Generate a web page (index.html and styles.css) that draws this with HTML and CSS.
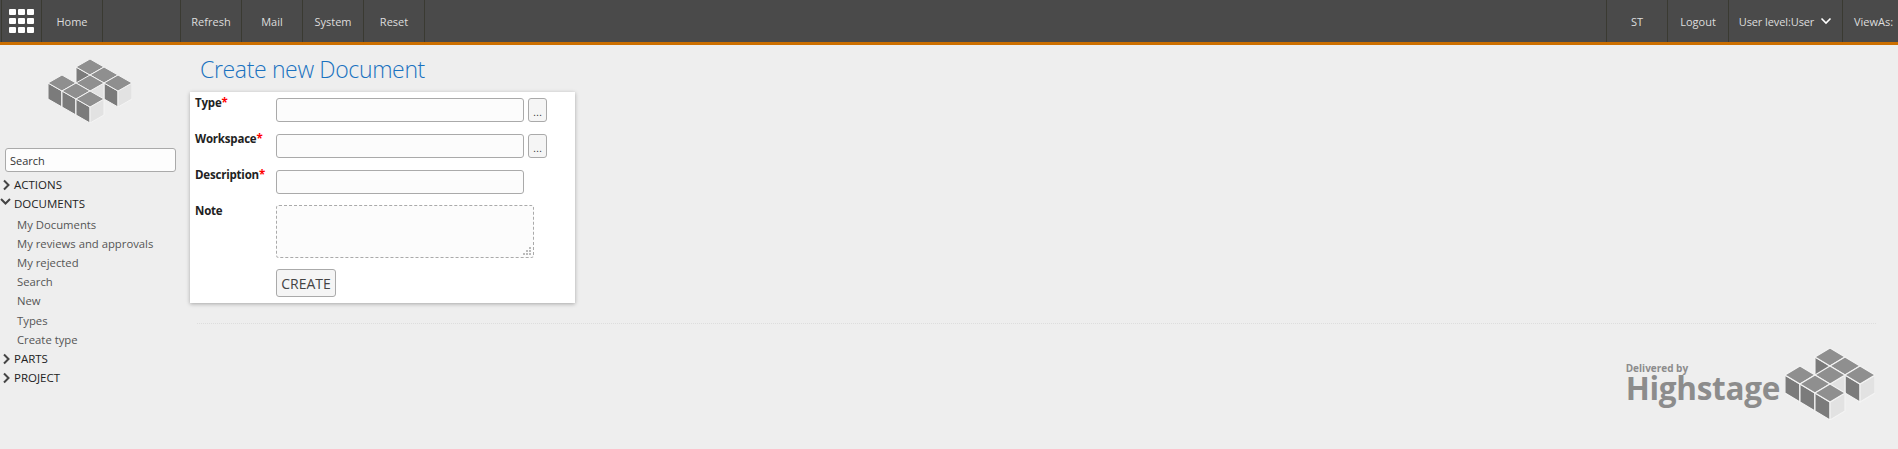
FILE: index.html
```html
<!DOCTYPE html>
<html lang="en">
<head>
  <meta charset="UTF-8" />
  <title>Create new Document</title>
  <link rel="stylesheet" href="styles.css">
</head>
<body>
  <svg class="defs" width="0" height="0">
    <defs>
      <g id="cube">
        <polygon class="left" points="-14,0 0,8 0,24 -14,16" />
        <polygon class="right" points="14,0 0,8 0,24 14,16" />
        <polygon class="top" points="0,-8 14,0 0,8 -14,0" />
      </g>
      <symbol id="logo" viewBox="0 0 84 64" preserveAspectRatio="none">
        <use href="#cube" x="42" y="8" />
        <use href="#cube" x="56" y="16" />
        <use href="#cube" x="70" y="24" />
        <use href="#cube" x="42" y="24" />
        <use href="#cube" x="14" y="24" />
        <use href="#cube" x="28" y="32" />
        <use href="#cube" x="42" y="40" />
      </symbol>
    </defs>
  </svg>

  <header class="topbar">
    <nav class="nav">
      <a class="apps" href="#">
        <span class="apps-grid">
          <i></i><i></i><i></i><i></i><i></i><i></i><i></i><i></i><i></i>
        </span>
      </a>
      <a class="w61" href="#">Home</a>
      <a class="w78" href="#"></a>
      <a class="w61" href="#">Refresh</a>
      <a class="w61" href="#">Mail</a>
      <a class="w61" href="#">System</a>
      <a class="w61" href="#">Reset</a>
    </nav>
    <nav class="nav nav-right">
      <a class="w61" href="#">ST</a>
      <a class="w61" href="#">Logout</a>
      <a class="w114" href="#">User level:User
        <svg class="caret" width="12" height="8" viewBox="0 0 12 8"><path d="M1.5 1.5 6 6l4.5-4.5" fill="none" stroke="#fff" stroke-width="1.6" /></svg>
      </a>
      <a class="viewas" href="#">ViewAs:</a>
    </nav>
  </header>

  <div class="layout">
    <aside class="sidebar">
      <svg class="side-logo"><use href="#logo" /></svg>
      <input class="side-search" type="text" value="Search" />
      <ul class="menu">
        <li class="menu-head"><svg class="chev" width="9" height="12" viewBox="0 0 9 12"><path d="M2 1.5 6.5 6 2 10.5" /></svg>ACTIONS</li>
        <li class="menu-head"><svg class="chev" width="9" height="12" viewBox="0 0 9 12"><path d="M-1 1 3.5 5.5 8 1" /></svg>DOCUMENTS</li>
        <li class="menu-item first">My Documents</li>
        <li class="menu-item">My reviews and approvals</li>
        <li class="menu-item">My rejected</li>
        <li class="menu-item">Search</li>
        <li class="menu-item">New</li>
        <li class="menu-item types">Types</li>
        <li class="menu-item">Create type</li>
        <li class="menu-head"><svg class="chev" width="9" height="12" viewBox="0 0 9 12"><path d="M2 1.5 6.5 6 2 10.5" /></svg>PARTS</li>
        <li class="menu-head"><svg class="chev" width="9" height="12" viewBox="0 0 9 12"><path d="M2 1.5 6.5 6 2 10.5" /></svg>PROJECT</li>
      </ul>
    </aside>

    <main class="content">
      <h1>Create new Document</h1>
      <form class="card">
        <div class="row">
          <label>Type<span class="req">*</span></label>
          <input type="text" /><button type="button" class="pick">...</button>
        </div>
        <div class="row">
          <label>Workspace<span class="req">*</span></label>
          <input type="text" /><button type="button" class="pick">...</button>
        </div>
        <div class="row">
          <label>Description<span class="req">*</span></label>
          <input type="text" />
        </div>
        <div class="row row-note">
          <label>Note</label>
          <div class="note-wrap">
            <textarea></textarea>
            <svg class="grip" width="8" height="8" viewBox="0 0 8 8" fill="#bbb">
              <rect x="6" y="0" width="2" height="2" />
              <rect x="3" y="3" width="2" height="2" /><rect x="6" y="3" width="2" height="2" />
              <rect x="0" y="6" width="2" height="2" /><rect x="3" y="6" width="2" height="2" /><rect x="6" y="6" width="2" height="2" />
            </svg>
          </div>
        </div>
        <div class="row row-submit">
          <label></label>
          <button type="button" class="create">CREATE</button>
        </div>
      </form>
      <hr class="rule" />
      <div class="delivered">
        <div class="brand">
          <span class="brand-by">Delivered by</span>
          <span class="brand-name">Highstage</span>
        </div>
        <svg class="foot-logo"><use href="#logo" /></svg>
      </div>
    </main>
  </div>
</body>
</html>
```

FILE: styles.css
```css
* { box-sizing: border-box; }
html, body { height: 100%; }
body { margin: 0; background: #eee; color: #222; font-family: "Open Sans", "Noto Sans", sans-serif; font-size: 12px; overflow: hidden; }
.defs { display: block; height: 0; }

.left { fill: #7b7b7b; stroke: #f4f4f4; stroke-width: 1; }
.right { fill: #e2e2e2; stroke: #f4f4f4; stroke-width: 1; }
.top { fill: #8f8f8f; stroke: #f4f4f4; stroke-width: 1; }

.topbar { display: flex; justify-content: space-between; height: 45px; background: #4a4a4a; border-bottom: 3px solid #cc6f00; }
.nav { display: flex; margin-left: 1px; border-left: 1px solid #3a3a32; }
.nav a { display: flex; align-items: center; justify-content: center; gap: 6px; height: 42px; border-right: 1px solid #3a3a32; color: #ddd; font-size: 11px; text-decoration: none; }
.nav-right { border-left: 1px solid #3a3a32; }
.nav-right a:last-child { border-right: 0; }
.apps { width: 40px; }
.w61 { width: 61px; }
.w78 { width: 78px; }
.w114 { width: 114px; letter-spacing: -.1px; }
.viewas { width: 55px; justify-content: flex-start !important; padding-left: 11px; }
.apps-grid { display: grid; grid-template-columns: repeat(3, 7px); grid-auto-rows: 6px; gap: 3px 2px; }
.apps-grid i { background: #fff; border-radius: 1px; }

.layout { display: flex; }
.sidebar { width: 190px; flex: none; padding: 14px 0 0 5px; }
.side-logo { display: block; width: 84px; height: 64px; margin: 0 0 25px 43px; }
.side-search { display: block; width: 171px; height: 24px; padding: 0 4px; border: 1px solid #aaa; border-radius: 3px; background: #fdfdfd; color: #333; font: 11px "Open Sans", "Noto Sans", sans-serif; }
.menu { list-style: none; margin: 3px 0 0 -3px; padding: 0; }
.menu-head { display: flex; align-items: center; height: 19px; color: #222; font-size: 11.5px; }
.chev { flex: none; margin-right: 3px; fill: none; stroke: #444; stroke-width: 2; overflow: visible; }
.menu-item { height: 19px; line-height: 19px; padding-left: 15px; color: #555; font-size: 11.3px; }
.first { margin-top: 2px; }
.types { margin-top: 1px; }

.content { flex: 1; min-width: 0; }
h1 { margin: 7px 0 0 10px; height: 40px; color: #1a72c0; font-size: 23px; font-weight: 300; line-height: 34px; letter-spacing: -.35px; }
.card { width: 385px; height: 211px; padding: 6px 0 0 5px; background: #fff; box-shadow: 0 1px 4px rgba(0,0,0,.3); }
.row { display: flex; height: 36px; }
.row label { width: 81px; flex: none; margin-top: -2px; font-weight: 700; font-size: 11.5px; line-height: 14px; letter-spacing: -.2px; color: #222; }
.req { color: #f00; }
.row input { width: 248px; height: 24px; padding: 0 4px; border: 1px solid #aaa; border-radius: 3px; background: #fcfcfc; }
.pick { width: 19px; height: 24px; margin-left: 4px; padding: 0; border: 1px solid #aaa; border-radius: 3px; background: #f5f5f5; color: #444; font-size: 11px; line-height: 26px; }
.row-note { height: 64px; margin-top: -1px; }
.row-note label { margin-top: -1px; }
.note-wrap { position: relative; width: 258px; height: 53px; }
.note-wrap textarea { display: block; width: 258px; height: 53px; border: 1px dashed #aaa; border-radius: 3px; background: #fcfcfc; resize: none; }
.grip { position: absolute; right: 3px; bottom: 3px; }
.row-submit { height: 28px; }
.create { width: 60px; height: 28px; padding: 0; border: 1px solid #aaa; border-radius: 3px; background: #f5f5f5; color: #444; font: 14px "Open Sans", "Noto Sans", sans-serif; }

.rule { height: 0; margin: 20px 22px 0 7px; border: 0; border-top: 1px dotted #ddd; }
.delivered { display: flex; justify-content: flex-end; align-items: flex-start; gap: 5px; margin: 24px 23px 0 0; }
.brand { display: flex; flex-direction: column; margin-top: 13px; color: #8c8c8c; font-weight: 700; }
.brand-by { font-size: 10px; line-height: 14px; }
.brand-name { font-size: 31.5px; line-height: 26px; letter-spacing: -.3px; }
.foot-logo { width: 90px; height: 72px; flex: none; }
```
